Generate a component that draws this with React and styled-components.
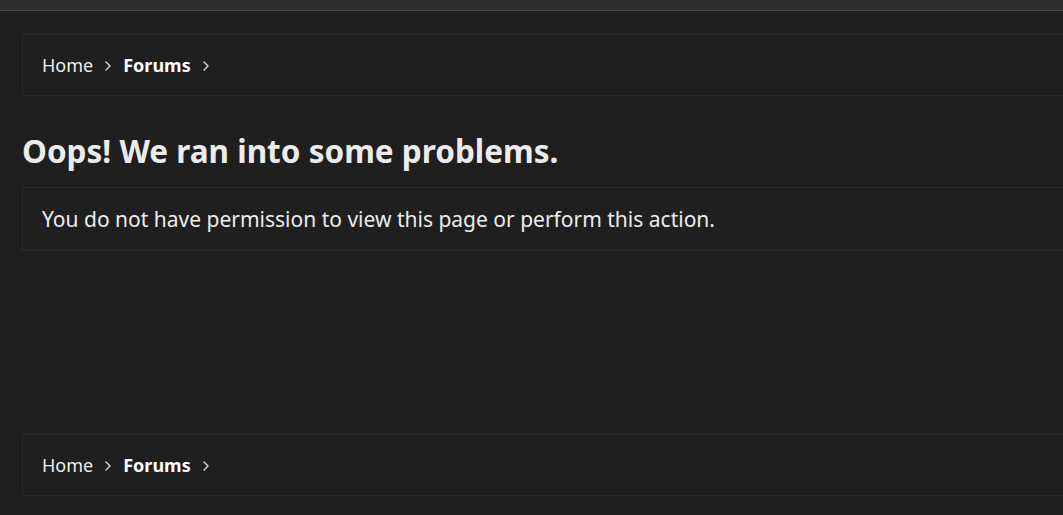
import styled, { createGlobalStyle } from "styled-components";

const GlobalStyle = createGlobalStyle`
  html, body {
    margin: 0;
    padding: 0;
    background: #1f1f1f;
  }
  body {
    font-family: "Noto Sans", "Open Sans", "DejaVu Sans", sans-serif;
    color: #ececec;
    overflow: hidden;
  }
`;

const Chevron = () => (
  <svg width="10" height="12" viewBox="0 0 10 12" fill="none">
    <path d="M3 2l4 4-4 4" stroke="#d6d6d6" strokeWidth="1.4" strokeLinecap="round" strokeLinejoin="round" />
  </svg>
);

const Breadcrumbs = () => (
  <Crumbs>
    <Crumb>Home</Crumb>
    <Chevron />
    <Crumb $current>Forums</Crumb>
    <Chevron />
  </Crumbs>
);

const App = () => {
  return (
    <>
      <GlobalStyle />
      <TopBar />
      <Page>
        <Content>
          <Breadcrumbs />
          <Title>Oops! We ran into some problems.</Title>
          <Notice>You do not have permission to view this page or perform this action.</Notice>
          <Spacer />
          <Breadcrumbs />
        </Content>
      </Page>
    </>
  );
};

export default App;

const TopBar = styled.div`
  height: 10px;
  background: #2d2d2d;
  border-bottom: 1px solid #474747;
`;

const Page = styled.div`
  padding: 23px 0 20px 22px;
  overflow: hidden;
`;

const Content = styled.div`
  width: 1080px;
  display: flex;
  flex-direction: column;
`;

const Crumbs = styled.div`
  display: flex;
  align-items: center;
  gap: 10px;
  height: 60px;
  padding: 0 19px;
  border: 1px solid #2b2b2b;
  font-size: 18px;

  svg {
    margin-top: 1px;
  }
`;

const Crumb = styled.span`
  font-weight: ${(p) => (p.$current ? 700 : 400)};
  color: ${(p) => (p.$current ? "#ffffff" : "#f0f0f0")};
`;

const Title = styled.h1`
  margin: 34px 0 15px;
  font-size: 31.5px;
  line-height: 42px;
  font-weight: 700;
  color: #ececec;
`;

const Notice = styled.div`
  display: flex;
  align-items: center;
  height: 62px;
  padding: 0 19px;
  border: 1px solid #2b2b2b;
  font-size: 21px;
  color: #ececec;
`;

const Spacer = styled.div`
  height: 183px;
`;
